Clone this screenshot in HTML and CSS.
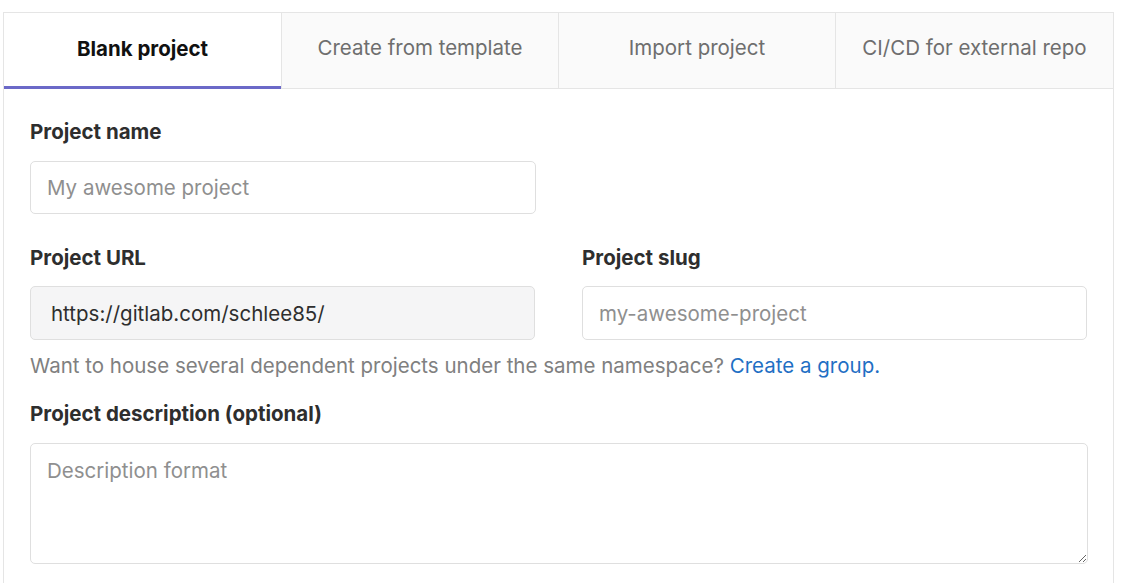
FILE: index.html
```html
<!DOCTYPE html>
<html lang="en">
<head>
<meta charset="utf-8">
<title>New project</title>
<link rel="stylesheet" href="styles.css">
</head>
<body>
<div class="card">
  <nav class="tabs">
    <div class="tab active">Blank project</div>
    <div class="tab">Create from template</div>
    <div class="tab">Import project</div>
    <div class="tab">CI/CD for external repo</div>
  </nav>
  <form class="panel">
    <div class="field">
      <label class="label">Project name</label>
      <input class="input half" type="text" placeholder="My awesome project">
    </div>
    <div class="row">
      <div class="field">
        <label class="label">Project URL</label>
        <div class="input readonly">https://gitlab.com/schlee85/</div>
      </div>
      <div class="field">
        <label class="label">Project slug</label>
        <input class="input" type="text" placeholder="my-awesome-project">
      </div>
    </div>
    <p class="help">Want to house several dependent projects under the same namespace? <a href="#" class="link">Create a group.</a></p>
    <div class="field">
      <label class="label">Project description (optional)</label>
      <textarea class="input textarea" placeholder="Description format"></textarea>
    </div>
  </form>
</div>
</body>
</html>
```
FILE: styles.css
```css
* { box-sizing: border-box; }
html, body { margin: 0; padding: 0; background: #fff; }
body {
  font-family: Inter, "Liberation Sans", sans-serif;
  font-size: 20.5px;
  color: #2e2e2e;
  padding: 12px 0 0 3px;
}
.card {
  width: 1111px;
  border: 1px solid #e5e5e5;
  border-bottom: none;
  height: 600px;
}
.tabs {
  display: grid;
  grid-template-columns: 277px 277px 277px 1fr;
  height: 76px;
  border-bottom: 1px solid #e5e5e5;
  background: #fafafa;
}
.tab {
  display: flex;
  align-items: center;
  justify-content: center;
  color: #6e6e6e;
  border-left: 1px solid #e5e5e5;
  font-size: 20.5px;
  padding-bottom: 6px;
}
.tab:first-child { border-left: none; }
.tab.active {
  background: #fff;
  color: #111;
  font-weight: 700;
  box-shadow: inset 0 -3px 0 #6b69c8;
  margin-bottom: -1px;
  padding-bottom: 5px;
}
.panel {
  padding: 29px 25px 0 26px;
  display: flex;
  flex-direction: column;
}
.field { display: flex; flex-direction: column; }
.label {
  font-weight: 700;
  line-height: 28px;
  margin-bottom: 15px;
  color: #2e2e2e;
}
.input {
  height: 53px;
  border: 1px solid #dfdfdf;
  border-radius: 5px;
  padding: 0 16px;
  font-family: inherit;
  font-size: 20.5px;
  color: #2e2e2e;
  background: #fff;
  outline: none;
}
.input::placeholder { color: #8f8f8f; }
.half { width: 506px; }
.row {
  display: grid;
  grid-template-columns: 505px 505px;
  column-gap: 47px;
  margin-top: 30px;
}
.row .label { margin-bottom: 14px; }
.row .input { height: 54px; }
.readonly {
  display: flex;
  align-items: center;
  background: #f5f5f6;
  padding-left: 20px;
}
.help {
  margin: 12px 0 20px;
  line-height: 28px;
  color: #808080;
}
.link { color: #1f6fc4; text-decoration: none; }
.textarea {
  height: 121px;
  padding: 12px 16px;
  line-height: 30px;
  resize: vertical;
}
```
